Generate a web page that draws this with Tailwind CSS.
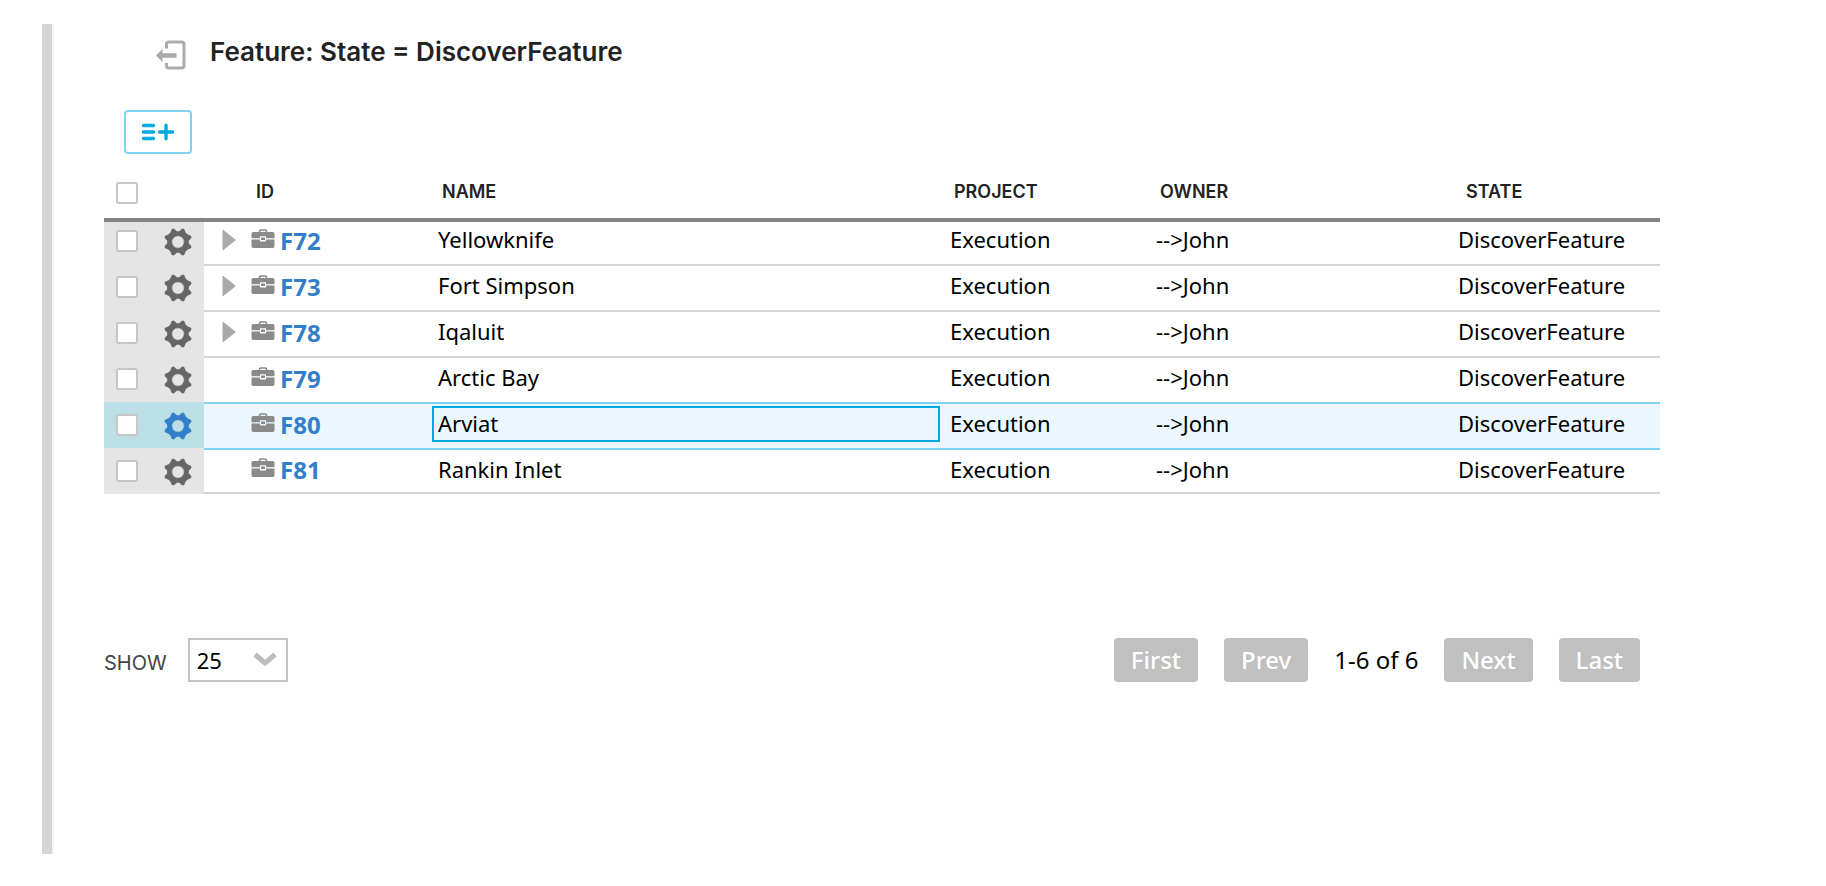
<!DOCTYPE html>
<html lang="en">
<head>
<meta charset="utf-8">
<meta name="viewport" content="width=device-width, initial-scale=1">
<title>Feature: State = DiscoverFeature</title>
<script src="https://cdn.jsdelivr.net/npm/@tailwindcss/browser@4"></script>
</head>
<body class="bg-white font-['Noto_Sans',sans-serif] text-[22px] text-black">
<svg class="hidden" aria-hidden="true">
  <symbol id="gear" viewBox="-14 -14 28 28">
    <path fill="currentColor" stroke="currentColor" stroke-width=".6" stroke-linejoin="round" fill-rule="evenodd" d="M-5.800-13H-3.800Q-2.200-10.300 0-10.300T3.800-13H5.800L7.400-9.400 9.400-7.400 13-5.800V-3.800Q10.300-2.200 10.300 0T13 3.800V5.800L9.400 7.400 7.400 9.400 5.800 13H3.800Q2.200 10.300 0 10.300T-3.800 13H-5.800L-7.400 9.400-9.400 7.400-13 5.800V3.800Q-10.300 2.200-10.300 0T-13-3.800V-5.800L-9.400-7.400-7.400-9.400ZM0-6.200A6.200 6.200 0 1 0 0 6.200 6.200 6.200 0 1 0 0-6.200Z"/>
  </symbol>
  <symbol id="case" viewBox="0 0 24 20">
    <path d="M8.500 4V2.200Q8.500 1 9.700 1h4.600q1.200 0 1.200 1.200V4" fill="none" stroke="#8a8a8a" stroke-width="1.600"/>
    <path d="M2.200 3h19.600Q23.500 3 23.500 4.700V9.200H15V7.200H9v2H.5V4.700Q.5 3 2.200 3ZM.5 10.400H9v2h6v-2h8.500v6.900q0 1.700-1.700 1.700H2.200Q.5 19 .5 17.300Z" fill="#8a8a8a"/>
    <path d="M10 8.500h4v2.500h-4z" fill="#8a8a8a"/>
  </symbol>
  <symbol id="arrow" viewBox="0 0 14 22">
    <path d="M1 1.200 13.300 11 1 20.800Z" fill="#a9a9a9" stroke="#a9a9a9" stroke-linejoin="round"/>
  </symbol>
</svg>

<div class="flex min-h-screen pt-6 pb-8 pl-[42px]">
  <div class="w-3 shrink-0 border-r-2 border-[#f0f5fa] bg-[#d6d6d6]"></div>
  <main class="min-w-0 flex-1 pr-[166px] pl-[50px]">
    <header class="flex items-start pl-[52px]">
      <a href="#" aria-label="Back" class="mt-4 mr-6 block">
        <svg class="h-[30px] w-[30px]" viewBox="0 0 30 30"><path d="M10.500 8.500V4.500Q10.500 2 13 2h12.500Q28 2 28 4.500v21q0 2.500-2.500 2.500H13q-2.500 0-2.500-2.500V23" fill="none" stroke="#ababab" stroke-width="3"/><path d="M0 15.500 6.500 9v4.200H20.500v4.600H6.500V22Z" fill="#ababab"/></svg>
      </a>
      <h1 class="pt-2.5 pb-1.5 font-['Inter'] text-[26px] leading-9 font-semibold text-[#222]">Feature: State = DiscoverFeature</h1>
    </header>
    <button type="button" aria-label="Add row" class="mt-[34px] ml-5 flex h-11 w-[68px] items-center justify-center rounded border-2 border-[#7fd3f0] bg-white">
      <svg class="h-[18px] w-8" viewBox="0 0 32 18"><path d="M1.500 2.500h10M1.500 9h10M1.500 15.500h10M17.500 9h13M24 2.200v13.600" fill="none" stroke="#00a9e0" stroke-width="3.400" stroke-linecap="round"/></svg>
    </button>

    <table class="mt-3 w-full table-fixed border-separate border-spacing-0 text-left">
      <colgroup><col class="w-[46px]"><col class="w-[54px]"><col class="w-[228px]"><col><col class="w-[206px]"><col class="w-[302px]"><col class="w-[208px]"></colgroup>
      <thead class="font-['Inter'] text-[18px] leading-6 font-semibold text-[#222]">
        <tr class="h-14">
          <th class="border-b-4 border-[#858585] p-0 pt-0.5 pl-3"><input type="checkbox" aria-label="Select all" class="block size-[22px] appearance-none rounded-[3px] border-2 border-[#c6c6c6] bg-white"></th>
          <th class="border-b-4 border-[#858585] p-0"></th>
          <th class="border-b-4 border-[#858585] p-0 pl-[52px] font-semibold">ID</th>
          <th class="border-b-4 border-[#858585] p-0 pl-2.5 font-semibold">NAME</th>
          <th class="border-b-4 border-[#858585] p-0 pl-2.5 font-semibold">PROJECT</th>
          <th class="border-b-4 border-[#858585] p-0 pl-2.5 font-semibold">OWNER</th>
          <th class="border-b-4 border-[#858585] p-0 pl-3.5 font-semibold">STATE</th>
        </tr>
      </thead>
      <tbody id="rows"></tbody>
    </table>

    <footer class="mt-36 flex items-center pr-5">
      <label for="size" class="pt-1.5 font-['Inter'] text-[20px] leading-7 text-[#444]">SHOW</label>
      <div class="relative ml-[21px]">
        <select id="size" class="block h-11 w-[100px] appearance-none border-2 border-[#c3c3c3] bg-white pl-[7px] text-[22px]"><option>25</option><option>50</option><option>100</option></select>
        <svg class="pointer-events-none absolute top-3.5 right-[11px] h-4 w-6" viewBox="0 0 24 16"><path d="M2 2.500 12 11 22 2.500" fill="none" stroke="#bdbdbd" stroke-width="5"/></svg>
      </div>
      <nav class="ml-auto flex items-center gap-[26px] text-[24px]" aria-label="Pages">
        <button type="button" class="h-11 rounded bg-[#c0c0c0] px-[17px] font-medium text-white">First</button>
        <button type="button" class="h-11 rounded bg-[#c0c0c0] px-[17px] font-medium text-white">Prev</button>
        <span>1-6 of 6</span>
        <button type="button" class="h-11 rounded bg-[#c0c0c0] px-[17px] font-medium text-white">Next</button>
        <button type="button" class="h-11 rounded bg-[#c0c0c0] px-[17px] font-medium text-white">Last</button>
      </nav>
    </footer>
  </main>
</div>

<script>
const data = [
  ["F72", "Yellowknife", true], ["F73", "Fort Simpson", true], ["F78", "Iqaluit", true],
  ["F79", "Arctic Bay", false], ["F80", "Arviat", false], ["F81", "Rankin Inlet", false]
];
const selected = 4;
document.getElementById("rows").innerHTML = data.map(([id, name, parent], i) => {
  const on = i === selected;
  const top = i === 0 ? "" : on || i === selected + 1 ? "border-t-2 border-t-[#7fd3f0]" : "border-t-2 border-t-[#d4d4d4]";
  const bottom = i === data.length - 1 ? "border-b-2 border-b-[#d4d4d4]" : "";
  const cell = `p-0 ${top} ${bottom} ${on ? "bg-[#ebf7fc]" : ""}`;
  const text = `${cell} leading-8 ${i === 0 ? "pb-2" : i === data.length - 1 ? "pb-1" : "pb-1.5"}`;
  const side = `p-0 ${i ? "pb-0" : "pb-1"} ${on ? "bg-[#bcdee5] text-[#337ec9]" : "bg-[#e5e5e5] text-[#666]"}`;
  return `<tr class="${i ? "h-[46px]" : "h-[42px]"}">
    <td class="${side} pl-3"><input type="checkbox" aria-label="Select ${id}" class="block size-[22px] appearance-none rounded-[3px] border-2 border-[#c6c6c6] bg-white"></td>
    <td class="${side} pl-3.5"><button type="button" aria-label="Actions for ${id}" class="block pt-0.5"><svg class="size-7"><use href="#gear"/></svg></button></td>
    <td class="${cell} ${i ? "pb-1" : "pb-1.5"}"><div class="flex items-center pl-[18px]">
      <span class="mr-[15px] block h-[22px] w-3.5">${parent ? `<button type="button" aria-label="Expand ${id}" class="block"><svg class="h-[22px] w-3.5"><use href="#arrow"/></svg></button>` : ""}</span>
      <svg class="mr-[5px] mb-0.5 h-5 w-6"><use href="#case"/></svg>
      <a href="#${id}" class="pt-0.5 text-[24px] leading-8 font-bold text-[#337ec9]">${id}</a></div></td>
    ${on ? `<td class="${cell} pb-1"><input aria-label="Name" value="${name}" class="block h-9 w-[calc(100%-4px)] border-2 border-[#00a9e0] bg-transparent px-1 pb-0.5 outline-none"></td>` : `<td class="${text} pl-1.5">${name}</td>`}
    <td class="${text} pl-1.5">Execution</td>
    <td class="${text} pl-1.5">--&gt;John</td>
    <td class="${text} pl-1.5">DiscoverFeature</td>
  </tr>`;
}).join("");
</script>
</body>
</html>
